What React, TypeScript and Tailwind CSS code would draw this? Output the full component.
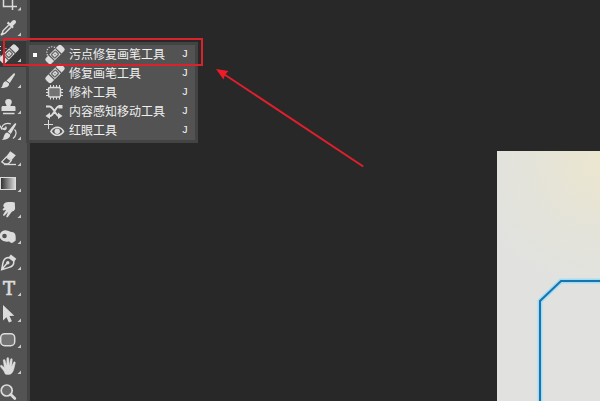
import type { ReactNode } from 'react'

interface Tool {
  label: string
  icon: ReactNode
  active?: boolean
  single?: boolean
}

interface MenuEntry {
  label: string
  icon: ReactNode
  checked?: boolean
}

const INK = '#dcdcdc'

function Bandage() {
  return (
    <g transform="rotate(-45)">
      <rect x="-11" y="-4" width="22" height="8" rx="2.200" fill={INK} />
      <path d="M-4.700-4v8M4.700-4v8" stroke="#555" strokeWidth="1.200" />
      <rect x="-2.800" y="-2.500" width="5.600" height="5" rx="1" fill="none" stroke="#666" strokeWidth="1.300" />
      <circle r=".8" fill="#777" />
    </g>
  )
}

const tools: Tool[] = [
  {
    label: '吸管工具',
    icon: (
      <>
        <path d="M10 8.2l2.3-2.4c1.1-1.2 2.5-1.1 3.2-.3.8.8.7 2.2-.4 3.2L12.800 11l1 1-1.600 1.600-5.400-5.400 1.600-1.600z" fill={INK} />
        <path d="M8.600 10.200L3 15.800l-.6 2.200L1 20l2-1 2-.8 5.800-5.800" fill="none" stroke={INK} strokeWidth="1.500" />
      </>
    ),
  },
  {
    label: '污点修复画笔工具',
    active: true,
    icon: (
      <>
        <path d="M0 5.500h1M3 5.500h1M5.500 7.500h1M0 9.500h1M0 15h1" stroke={INK} strokeWidth="1" />
        <g transform="translate(9 13)">
          <Bandage />
        </g>
      </>
    ),
  },
  {
    label: '画笔工具',
    icon: (
      <path
        d="M14.700 6.500c.5.300.4.900.1 1.400L9.800 16 6.500 13.500l6.900-6.800c.4-.4.900-.5 1.300-.2zM6 14.200l3.100 2.300c.2 3-2.500 4.500-8.500 4.500 1.900-1 1.700-2.500 2.300-4 .5-1.600 1.800-2.700 3.100-2.800z"
        fill={INK}
      />
    ),
  },
  {
    label: '仿制图章工具',
    icon: (
      <>
        <path d="M8.500 6a3.300 3.300 0 0 1 3.300 3.300c0 1.500-1.400 2.200-1.400 3.700H14c1 0 1.500.6 1.500 1.500V18h-14v-3.500c0-.9.6-1.500 1.500-1.500h3.600c0-1.500-1.400-2.200-1.400-3.700A3.300 3.300 0 0 1 8.500 6z" fill={INK} />
        <path d="M3 20.500h11.500" stroke={INK} strokeWidth="1.500" />
      </>
    ),
  },
  {
    label: '历史记录画笔工具',
    icon: (
      <>
        <path
          d="M15.800 4.300c.6.300.5.900.2 1.500L10.800 15 7.800 12.800l6.600-8.100c.4-.5.9-.7 1.400-.4zM7.300 13.500l2.900 2c.3 3-2.500 5.300-8.700 5.500 2.100-1 1.900-2.400 2.500-4.200.5-1.600 1.800-3.100 3.300-3.300z"
          fill={INK}
        />
        <path d="M11 5C7 3.400 2.500 5 1.800 8.600M0 6.500L1.600 10 6 8.800M3 9.800C5.500 12 7 9 5.500 7.500M14.500 10.500c2.500 2 1.800 6.500-1.500 9" fill="none" stroke={INK} strokeWidth="1.200" />
      </>
    ),
  },
  {
    label: '橡皮擦工具',
    icon: (
      <>
        <path d="M10.300 6.300l5.500 3.900-4.300 5.100-5.300-3.800z" fill={INK} />
        <path d="M6.200 12l5 3.700-3 3.300H4.800L1.800 16.800z" fill="none" stroke={INK} strokeWidth="1.300" />
        <path d="M4 19.500h12" stroke={INK} strokeWidth="1.300" />
      </>
    ),
  },
  {
    label: '渐变工具',
    icon: (
      <>
        <defs>
          <linearGradient id="ramp">
            <stop offset="0" stopColor="#2c2c2c" />
            <stop offset="1" stopColor="#dedede" />
          </linearGradient>
        </defs>
        <rect x=".5" y="6.500" width="15" height="12" fill="url(#ramp)" stroke={INK} />
      </>
    ),
  },
  {
    label: '涂抹工具',
    icon: (
      <path
        d="M4.500 6.200C7 4.600 11 5 14.800 5.400l.3 6.200c-.2 1.800-1.800 2.800-3.300 3.200L7.900 20c-.7.800-2 .1-1.600-.9l2-4.300-3.700 3.800c-.8.700-2-.1-1.400-1.100l3-4.700-2.300.6c-1 .2-1.700-.9-.9-1.600l1.500-1.300c-1.500-.8-1.700-2.900 0-4.300z"
        fill={INK}
      />
    ),
  },
  {
    label: '海绵工具',
    icon: (
      <>
        <path d="M0 11c1.200-2.800 3.500-4 6.500-3.600 2 .2 4.500 1.600 6.700 1.800 1.600.6 2.500 2.500 2.500 5v3.400l-3 2.200c-1.500.4-2.500-.3-3.500-1.200C6.500 19 2 18.700 0 15z" fill={INK} />
        <circle cx="4.500" cy="13" r="2.300" fill="#535353" />
      </>
    ),
  },
  {
    label: '钢笔工具',
    icon: (
      <>
        <path d="M10.800 5.500l5.500 4.300-2 2.600L8.800 8.200z" fill={INK} />
        <path d="M9.300 8.600l4.500 3.600c.2 2.700-1.600 5.300-4.600 6.200L1.700 20.600 3 13.500c.8-3 3-4.900 6.300-4.900zM1.700 20.600L7.300 14" fill="none" stroke={INK} strokeWidth="1.500" />
        <circle cx="7.800" cy="13.700" r="1.700" fill={INK} />
      </>
    ),
  },
  {
    label: '横排文字工具',
    icon: (
      <text
        x="9"
        y="20"
        textAnchor="middle"
        fill={INK}
        stroke={INK}
        strokeWidth=".7"
        className="font-['DejaVu_Serif',serif] text-[18px]"
      >
        T
      </text>
    ),
  },
  {
    label: '路径选择工具',
    icon: <path d="M3 4v15.500l3.500-3.300 2.400 5.300 3-1.300-2.400-5.200 4.800-.2z" fill={INK} />,
  },
  {
    label: '圆角矩形工具',
    icon: <rect x=".7" y="6.700" width="14" height="12" rx="4" fill="#737373" stroke={INK} strokeWidth="1.500" />,
  },
  {
    label: '抓手工具',
    icon: (
      <path
        d="M5.200 21C4 17.600 2 15.800.3 13.500c-.5-.9.8-1.700 1.700-.9l2.300 2L3.200 7.500c-.1-1.200 1.500-1.500 1.900-.3l1.500 5.300.2-7c.1-1.200 1.900-1.200 2 0l.4 7 1.300-6.200c.3-1.100 1.900-.9 1.800.3l-.6 6.800 1.900-4.200c.6-1 2-.4 1.700.7-.9 3.400-1.200 7.500-3.100 9.800-1.100 1.900-5.200 2.300-7 1.300z"
        fill={INK}
        stroke={INK}
        strokeWidth=".4"
      />
    ),
  },
  {
    label: '缩放工具',
    single: true,
    icon: (
      <>
        <circle cx="6.700" cy="11.500" r="5.500" fill="#696969" stroke={INK} strokeWidth="1.700" />
        <path d="M10.800 15.500l4 4" stroke={INK} strokeWidth="2.800" strokeLinecap="round" />
      </>
    ),
  },
]

const menu: MenuEntry[] = [
  {
    label: '污点修复画笔工具',
    checked: true,
    icon: (
      <>
        <path d="M10 2.500C5 0 0 4 2.500 10.500" fill="none" stroke={INK} strokeWidth="1.200" strokeDasharray="1.200 1.500" />
        <g transform="translate(10 9.500)">
          <Bandage />
        </g>
      </>
    ),
  },
  {
    label: '修复画笔工具',
    icon: (
      <g transform="translate(10 9.500)">
        <Bandage />
      </g>
    ),
  },
  {
    label: '修补工具',
    icon: (
      <>
        <rect x="3.500" y="4.500" width="12" height="9.500" rx="1.500" fill="#737373" stroke={INK} strokeWidth="1.500" />
        <path d="M5.500 2v2M8.500 2v2M11.500 2v2M14.500 2v2M5.500 14v2.500M8.500 14v2.500M11.500 14v2.500M14.500 14v2.500M1 6.500h2.500M1 9.500h2.500M1 12.500h2.500M15.500 6.500H18M15.500 9.500H18M15.500 12.500H18" stroke={INK} strokeWidth="1" />
      </>
    ),
  },
  {
    label: '内容感知移动工具',
    icon: (
      <>
        <path d="M1 4.500h3.500c4 0 6 9.500 9.500 9.500h1M17 4.500h-3C10 4.500 9 14 5 14H4" fill="none" stroke={INK} strokeWidth="1.800" />
        <path d="M13 10.500l4.500 3.500-4.500 3zM5 10.500L.5 14 5 17zM13.500 3h4v3.500h-4z" fill={INK} />
      </>
    ),
  },
  {
    label: '红眼工具',
    icon: (
      <>
        <path d="M3.500-1v9M-1 3.500h9" stroke={INK} strokeWidth="1" />
        <path d="M6 10.500c3-5.600 9.500-5.600 12.500 0-3 5-9.500 5-12.500 0z" fill="none" stroke={INK} strokeWidth="1.600" />
        <circle cx="12.200" cy="10.200" r="2.700" fill={INK} />
      </>
    ),
  },
]

function Toolbar() {
  return (
    <nav className="flex w-[30px] shrink-0 flex-col border-r-3 border-[#434343] bg-[#535353]">
      <button aria-label="裁剪工具" className="h-[15px] shrink-0">
        <svg width="27" height="15" className="block">
          <path d="M3.500 0v6.500H17M12.500 0v10" fill="none" stroke={INK} strokeWidth="1.500" />
          <path d="M21 7v3.500h-3.500z" fill="#cacaca" />
        </svg>
      </button>
      {tools.map((tool) => (
        <button
          key={tool.label}
          aria-label={tool.label}
          className={`h-[26px] shrink-0 ${tool.active ? 'bg-[#383838]' : ''}`}
        >
          <svg width="27" height="26" className="block">
            {tool.icon}
            {!tool.single && <path d="M21 17.500v3.500h-3.500z" fill="#cacaca" />}
          </svg>
        </button>
      ))}
    </nav>
  )
}

function ToolMenu() {
  return (
    <ul className="absolute top-[42px] left-[26px] w-[172px] border-3 border-[#434343] bg-[#535353]">
      {menu.map((entry) => (
        <li key={entry.label}>
          <button className="flex h-[19px] w-full items-center pr-[7px] text-xs text-[#f0f0f0]">
            <span className="flex w-4 pl-1">
              {entry.checked && <span className="size-1 bg-white" />}
            </span>
            <svg width="20" height="19" className="mr-1 shrink-0 overflow-visible">
              {entry.icon}
            </svg>
            <span className="whitespace-nowrap">{entry.label}</span>
            <span className="ml-auto font-['Liberation_Mono',monospace] text-[11px]">J</span>
          </button>
        </li>
      ))}
    </ul>
  )
}

function Document() {
  return (
    <section className="mt-[151px] w-[103px] overflow-hidden bg-[#e1e2e0] bg-[radial-gradient(circle_at_100%_5%,#ebe6cf_0%,#e4e3da_28%,#e1e2e0_50%)]">
      <svg width="100%" height="100%" className="block">
        <path d="M43 600V150l21-20h600" fill="none" stroke="#a5dcf2" strokeWidth="5" />
        <path d="M43 600V150l21-20h600" fill="none" stroke="#1674ae" strokeWidth="2" />
      </svg>
    </section>
  )
}

export default function App() {
  return (
    <div className="relative flex h-screen overflow-hidden bg-[#282828] font-['Liberation_Sans','Noto_Sans_CJK_SC',sans-serif]">
      <Toolbar />
      <main className="flex flex-1 justify-end">
        <Document />
      </main>
      <ToolMenu />

      {/* Annotations */}
      <div className="pointer-events-none absolute top-[38px] left-[3px] h-7 w-[200px] border-2 border-[#d9222c]" />
      <svg width="150" height="102" className="pointer-events-none absolute top-[67px] left-[215px]">
        <path d="M8 6.500l139.500 92.500" stroke="#df202c" strokeWidth="2" strokeLinecap="round" />
        <path d="M1 2l12.500 2-3.500 3.700-1.500 4.800z" fill="#ef1c28" />
      </svg>
    </div>
  )
}
